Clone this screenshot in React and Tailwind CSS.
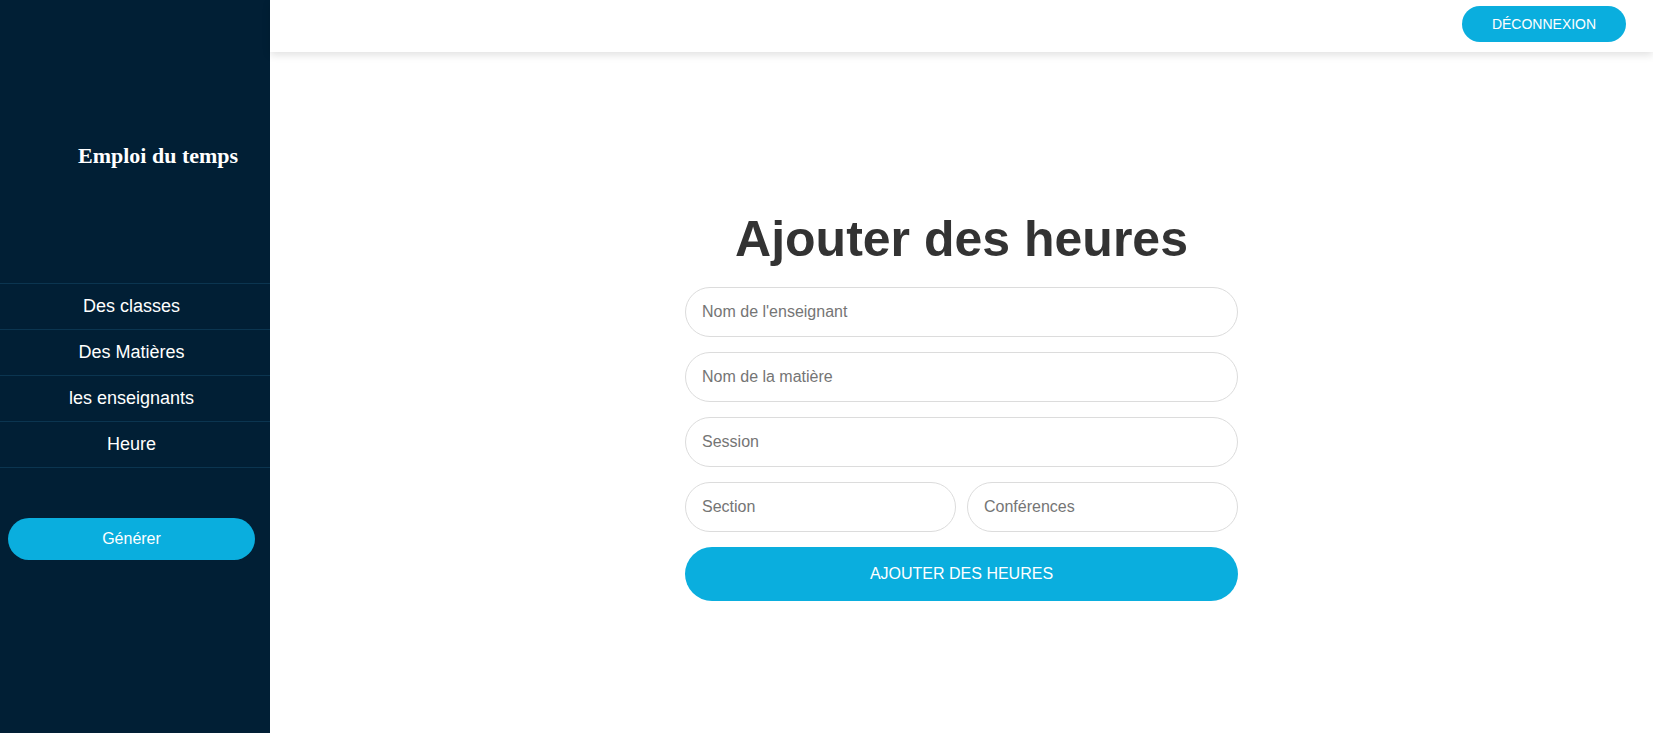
export default function App() {
  const items = ["Des classes", "Des Matières", "les enseignants", "Heure"];
  const inputCls =
    "h-[50px] w-full rounded-full border border-[#dcdcdc] px-[16px] text-[16px] text-[#333] outline-none placeholder:text-[#757575]";
  return (
    <div className="flex h-[733px] w-full overflow-hidden bg-white" style={{ fontFamily: '"Liberation Sans", Arial, sans-serif' }}>
      <aside className="flex w-[270px] shrink-0 flex-col bg-[#011f35]">
        <div className="h-[283px] pl-[78px] pt-[145px]">
          <h1 className="text-[22px] font-bold leading-none text-white" style={{ fontFamily: '"Liberation Serif", "Times New Roman", serif' }}>
            Emploi du temps
          </h1>
        </div>
        <nav className="border-t border-[#0b3550]">
          {items.map((t) => (
            <div key={t} className="flex h-[46px] items-center justify-center border-b border-[#0b3550] pr-[7px] text-[18px] text-white">
              {t}
            </div>
          ))}
        </nav>
        <div className="pl-[8px] pr-[15px] pt-[50px]">
          <button className="h-[42px] w-full rounded-full bg-[#0aaede] text-[16px] text-white">Générer</button>
        </div>
      </aside>
      <div className="flex min-w-0 flex-1 flex-col">
        <header className="flex h-[52px] shrink-0 items-start justify-end pr-[27px] pt-[6px] shadow-[0_3px_8px_rgba(0,0,0,0.12)]">
          <button className="h-[36px] w-[164px] rounded-full bg-[#0aaede] text-[14px] text-white">DÉCONNEXION</button>
        </header>
        <main className="flex flex-1 justify-center pt-[158px]">
          <div className="flex w-[553px] flex-col">
            <h2 className="mb-[19px] text-center text-[50px] font-bold leading-[58px] text-[#333333]">Ajouter des heures</h2>
            <div className="flex flex-col gap-[15px]">
              <input placeholder="Nom de l'enseignant" className={inputCls} />
              <input placeholder="Nom de la matière" className={inputCls} />
              <input placeholder="Session" className={inputCls} />
              <div className="flex gap-[11px]">
                <input placeholder="Section" className="h-[50px] min-w-0 flex-1 rounded-full border border-[#dcdcdc] px-[16px] text-[16px] text-[#333] outline-none placeholder:text-[#757575]" />
                <input placeholder="Conférences" className="h-[50px] min-w-0 flex-1 rounded-full border border-[#dcdcdc] px-[16px] text-[16px] text-[#333] outline-none placeholder:text-[#757575]" />
              </div>
              <button className="h-[54px] w-full rounded-full bg-[#0aaede] text-[16px] text-white">AJOUTER DES HEURES</button>
            </div>
          </div>
        </main>
      </div>
    </div>
  );
}
